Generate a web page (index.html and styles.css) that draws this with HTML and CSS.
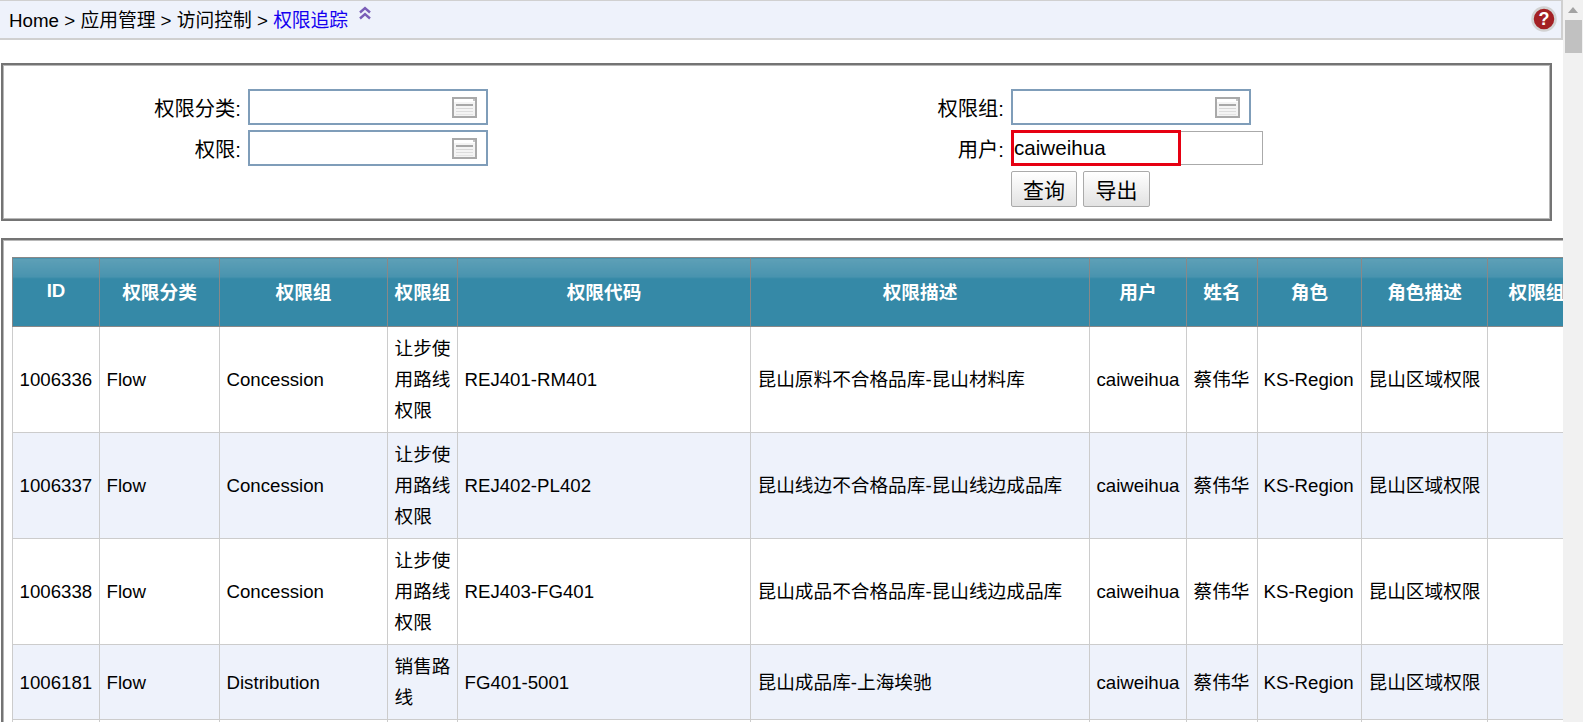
FILE: index.html
```html
<!DOCTYPE html>
<html lang="zh-CN">
<head>
  <meta charset="UTF-8">
  <meta name="viewport" content="width=device-width, initial-scale=1.0">
  <title>权限追踪</title>
  <link rel="stylesheet" href="styles.css">
</head>
<body>
  <svg class="defs" width="0" height="0">
    <symbol id="picker" viewBox="0 0 25 21">
      <rect x="1" y="1" width="23" height="19" fill="#f4f4f4" stroke="#a9a9a9" stroke-width="2"/>
      <rect x="2" y="2" width="21" height="3" fill="#fff"/>
      <rect x="21" y="2" width="2" height="2" fill="#c4c4c4"/>
      <rect x="4" y="7" width="17" height="2" fill="#a8a8a8"/>
      <rect x="4" y="11" width="17" height="1" fill="#d8d8d8"/>
      <rect x="4" y="14" width="17" height="1" fill="#dcdcdc"/>
      <rect x="4" y="17" width="17" height="1" fill="#e4e4e4"/>
    </symbol>
  </svg>

  <main class="page">
    <header class="crumbs">
      <span>Home &gt; 应用管理 &gt; 访问控制 &gt; <a href="#">权限追踪</a></span>
      <svg class="collapse" width="14" height="14" viewBox="0 0 14 14">
        <path d="M2 6.5 7 2l5 4.5M2 12.5 7 8l5 4.5" fill="none" stroke="#7a5db8" stroke-width="2.4"/>
      </svg>
      <svg class="help" width="26" height="26" viewBox="0 0 26 26">
        <circle cx="13" cy="13" r="11.5" fill="#a32024" stroke="#d2d2d2" stroke-width="2.5"/>
        <text x="13" y="19" text-anchor="middle" class="help-mark">?</text>
      </svg>
    </header>

    <section class="panel filter">
      <label class="filter-label first">权限分类:</label>
      <div class="picker"><svg width="25" height="21"><use href="#picker"/></svg></div>
      <label class="filter-label second">权限组:</label>
      <div class="picker"><svg width="25" height="21"><use href="#picker"/></svg></div>

      <label class="filter-label first">权限:</label>
      <div class="picker"><svg width="25" height="21"><use href="#picker"/></svg></div>
      <label class="filter-label second">用户:</label>
      <div class="user-field">caiweihua<span class="mark"></span></div>

      <div class="actions">
        <button type="button">查询</button>
        <button type="button">导出</button>
      </div>
    </section>

    <section class="panel results">
      <table>
        <colgroup>
          <col class="c-id"><col class="c-cat"><col class="c-group"><col class="c-gname"><col class="c-code">
          <col class="c-desc"><col class="c-user"><col class="c-name"><col class="c-role"><col class="c-rdesc"><col class="c-last">
        </colgroup>
        <thead>
          <tr>
            <th>ID</th><th>权限分类</th><th>权限组</th><th>权限组</th><th>权限代码</th>
            <th>权限描述</th><th>用户</th><th>姓名</th><th>角色</th><th>角色描述</th><th>权限组</th>
          </tr>
        </thead>
        <tbody>
          <tr>
            <td>1006336</td><td>Flow</td><td>Concession</td><td>让步使用路线权限</td><td>REJ401-RM401</td>
            <td>昆山原料不合格品库-昆山材料库</td><td>caiweihua</td><td>蔡伟华</td><td class="keep">KS-Region</td><td>昆山区域权限</td><td></td>
          </tr>
          <tr>
            <td>1006337</td><td>Flow</td><td>Concession</td><td>让步使用路线权限</td><td>REJ402-PL402</td>
            <td>昆山线边不合格品库-昆山线边成品库</td><td>caiweihua</td><td>蔡伟华</td><td class="keep">KS-Region</td><td>昆山区域权限</td><td></td>
          </tr>
          <tr>
            <td>1006338</td><td>Flow</td><td>Concession</td><td>让步使用路线权限</td><td>REJ403-FG401</td>
            <td>昆山成品不合格品库-昆山线边成品库</td><td>caiweihua</td><td>蔡伟华</td><td class="keep">KS-Region</td><td>昆山区域权限</td><td></td>
          </tr>
          <tr>
            <td>1006181</td><td>Flow</td><td>Distribution</td><td>销售路线</td><td>FG401-5001</td>
            <td>昆山成品库-上海埃驰</td><td>caiweihua</td><td>蔡伟华</td><td class="keep">KS-Region</td><td>昆山区域权限</td><td></td>
          </tr>
          <tr class="cut-off">
            <td></td><td></td><td></td><td></td><td></td><td></td><td></td><td></td><td></td><td></td><td></td>
          </tr>
        </tbody>
      </table>
    </section>
  </main>

  <aside class="scrollbar">
    <span class="scroll-up"></span>
    <span class="scroll-thumb"></span>
  </aside>
</body>
</html>
```

FILE: styles.css
```css
* {
  box-sizing: border-box;
}
html, body {
  height: 100%;
}
body {
  margin: 0;
  display: flex;
  overflow: hidden;
  background: white;
  color: #000;
  font-family: "Liberation Sans", "Noto Sans CJK SC", sans-serif;
  font-size: 18.67px;
}
.defs {
  position: absolute;
}
.page {
  flex: 1;
  min-width: 0;
  overflow: hidden;
}

/* breadcrumb bar */
.crumbs {
  display: flex;
  align-items: center;
  height: 40px;
  padding: 0 4px 2px 9px;
  background: #eef2fb;
  border-top: 1px solid #d0d0d0;
  border-right: 2px solid #d0d0d0;
  border-bottom: 2px solid #d0d0d0;
  font-size: 18.75px;
}
.crumbs a {
  color: #1500f0;
  text-decoration: none;
}
.collapse {
  margin: -12px 0 0 10px;
}
.help {
  margin-left: auto;
}
.help-mark {
  fill: white;
  font-size: 18px;
  font-weight: bold;
}

.panel {
  margin-left: 1px;
  border: 2px solid #747474;
  box-shadow: inset 0 0 0 1px #b8b8b8;
}

/* filter form */
.filter {
  display: grid;
  grid-template-columns: 245px 240px 523px 1fr;
  grid-auto-rows: 36px;
  row-gap: 5px;
  width: 1551px;
  height: 158px;
  margin-top: 23px;
  padding-top: 24px;
}
.filter-label {
  align-self: center;
  padding-right: 7px;
  font-size: 20.3px;
  text-align: right;
}
.picker {
  display: flex;
  align-items: center;
  justify-content: flex-end;
  width: 240px;
  padding-right: 9px;
  border: 2px solid #7f9db9;
  background: white;
}
.user-field {
  position: relative;
  width: 252px;
  height: 34px;
  margin-top: 1px;
  padding-left: 2px;
  border: 1px solid #aaa;
  font-size: 20.6px;
  line-height: 32px;
}
.mark {
  position: absolute;
  left: -1px;
  top: -2px;
  width: 170px;
  height: 36px;
  border: 3px solid #e60012;
}
.actions {
  grid-column: 4;
  display: flex;
  gap: 6px;
}
.actions button {
  width: 66px;
  padding: 0;
  border: 1px solid #aaa;
  border-radius: 2px;
  background: linear-gradient(to bottom, #fff, #e2e2e2);
  color: #000;
  font-family: inherit;
  font-size: 21px;
}
.actions button + button {
  width: 67px;
}

/* results table */
.results {
  width: max-content;
  margin-top: 17px;
  padding: 17px 0 60px 9px;
}
table {
  width: 1574px;
  border-collapse: collapse;
  table-layout: fixed;
}
.c-id { width: 87px; }
.c-cat { width: 120px; }
.c-group { width: 168px; }
.c-gname { width: 70px; }
.c-code { width: 293px; }
.c-desc { width: 339px; }
.c-user { width: 97px; }
.c-name { width: 71px; }
.c-role { width: 104px; }
.c-rdesc { width: 126px; }
.c-last { width: 98px; }
th {
  height: 69px;
  padding: 0 6px 3px;
  border: 1px solid #888;
  background: linear-gradient(to bottom, #5ea0b7, #4893ae 28%, #3589a7 29%);
  color: white;
  font-weight: bold;
  white-space: nowrap;
}
td {
  padding: 6px 6.5px;
  border: 1px solid #ccc;
  line-height: 31px;
}
td.keep {
  padding-left: 5.5px;
  white-space: nowrap;
}
tbody tr:nth-child(even) {
  background: #eef2fb;
}
.cut-off td {
  height: 40px;
  background: white;
}

/* page scrollbar */
.scrollbar {
  position: relative;
  flex: 0 0 20px;
  background: #f1f1f1;
}
.scroll-up {
  position: absolute;
  left: 5px;
  top: 7px;
  border-left: 5px solid transparent;
  border-right: 5px solid transparent;
  border-bottom: 6px solid #a3a3a3;
}
.scroll-thumb {
  position: absolute;
  left: 2px;
  top: 20px;
  width: 17px;
  height: 33px;
  background: #c1c1c1;
}
```
